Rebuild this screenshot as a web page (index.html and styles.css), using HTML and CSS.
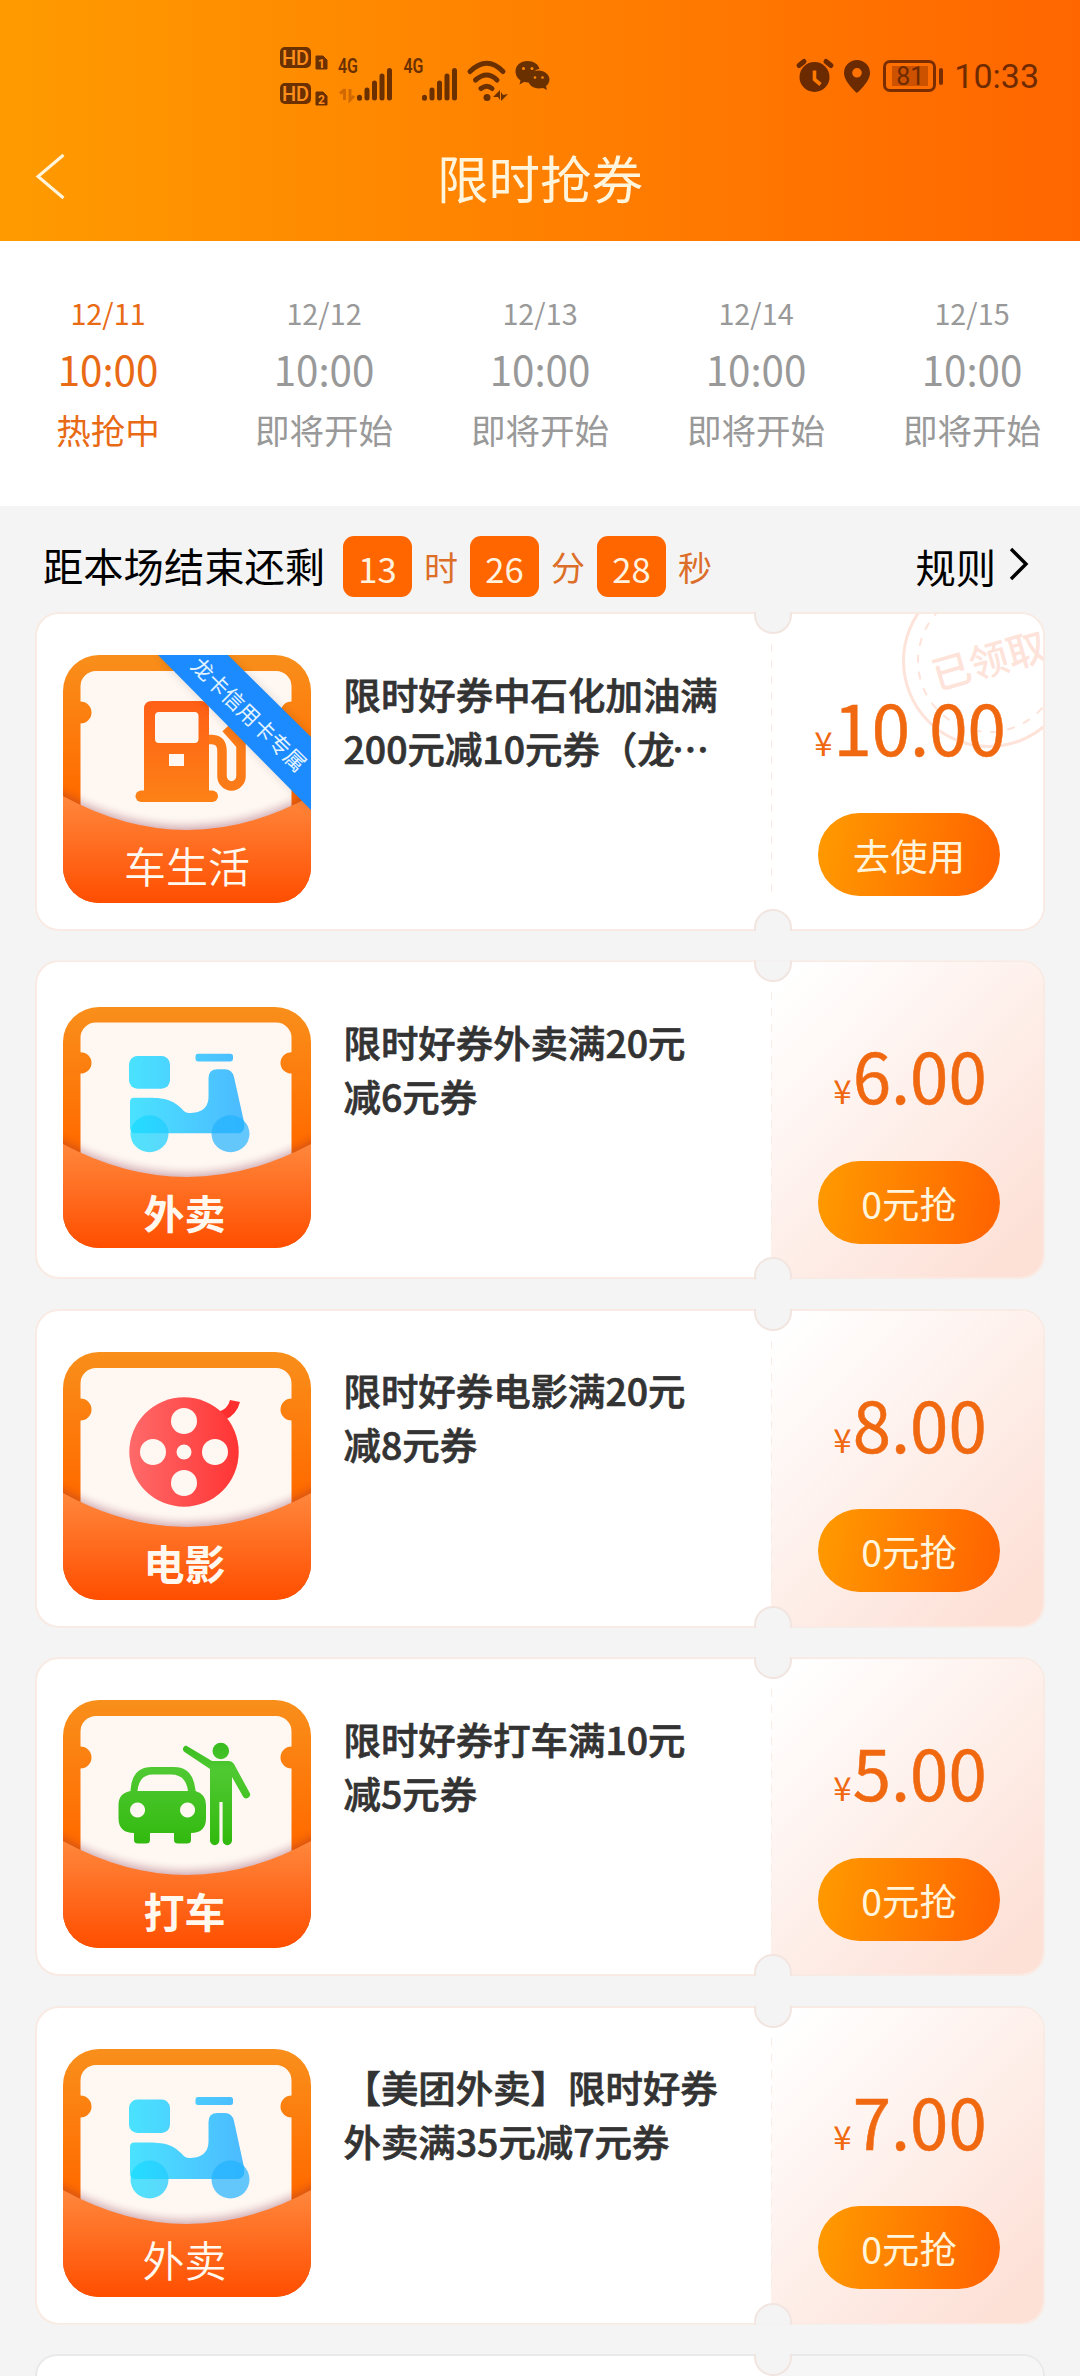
FILE: index.html
```html
<!DOCTYPE html>
<html lang="zh-CN">
<head>
<meta charset="utf-8">
<title>限时抢券</title>
<link rel="stylesheet" href="styles.css">
</head>
<body>
<svg class="defs" width="0" height="0" aria-hidden="true">
  <defs>
    <linearGradient id="frame" x1="0" y1="0" x2="0" y2="1"><stop offset="0" stop-color="#f98f1b"/><stop offset=".55" stop-color="#ff6c00"/><stop offset="1" stop-color="#ff6c00"/></linearGradient>
    <linearGradient id="flap" x1="0" y1="0" x2="0" y2="1"><stop offset="0" stop-color="#ff873c"/><stop offset="1" stop-color="#ff4e00"/></linearGradient>
    <linearGradient id="blue" gradientUnits="userSpaceOnUse" x1="66" y1="0" x2="186" y2="0"><stop offset="0" stop-color="#4ae2ff"/><stop offset="1" stop-color="#4cb9ff"/></linearGradient>
    <linearGradient id="wheel-l" x1="0" y1="0" x2="1" y2="0"><stop offset="0" stop-color="#18dcff"/><stop offset="1" stop-color="#23ccff"/></linearGradient>
    <linearGradient id="red" x1="0" y1="0" x2="1" y2="0"><stop offset="0" stop-color="#ff6a6a"/><stop offset="1" stop-color="#ff3434"/></linearGradient>
    <linearGradient id="green" gradientUnits="userSpaceOnUse" x1="0" y1="45" x2="0" y2="145"><stop offset="0" stop-color="#39bd20"/><stop offset=".25" stop-color="#50c932"/><stop offset="1" stop-color="#31b90e"/></linearGradient>
    <linearGradient id="pump" gradientUnits="userSpaceOnUse" x1="0" y1="46" x2="0" y2="147"><stop offset="0" stop-color="#ff5f16"/><stop offset="1" stop-color="#fd8216"/></linearGradient>
    <filter id="soft" x="-10%" y="-20%" width="120%" height="140%"><feGaussianBlur stdDeviation="5"/></filter>
    <clipPath id="round"><rect width="248" height="248" rx="36"/></clipPath>
    <symbol id="ticket" viewBox="0 0 248 248">
      <rect width="248" height="248" fill="url(#frame)"/>
      <path fill="#fff8f2" d="M33 16H213a15.500 15.500 0 0 1 15.500 15.500V46.500a11 11 0 0 0 0 22V200H17.500V68.500a11 11 0 0 0 0-22V31.500A15.500 15.500 0 0 1 33 16Z"/>
    </symbol>
    <symbol id="pocket" viewBox="0 0 248 248">
      <path d="M-10 133Q124 210 258 133V248H-10Z" fill="#7a1c3c" opacity=".36" filter="url(#soft)"/>
      <path d="M0 141Q124 209 248 141V248H0Z" fill="url(#flap)"/>
    </symbol>
    <symbol id="scooter" viewBox="0 0 248 248">
      <g fill="url(#blue)">
        <rect x="66" y="50.500" width="41" height="33.500" rx="8.500"/>
        <rect x="132.500" y="48" width="37.500" height="8" rx="2.500"/>
        <path d="M71 93.500H86C104 93.500 111 97 119 105Q122 109 126 109C137 109 145.500 105 145.500 92V73Q145.500 64 154.500 64H162Q169 64 171 72L181 118Q183 130 174 130H73Q67 130 67 124V98Q67 93.500 71 93.500Z"/>
      </g>
      <circle cx="86.500" cy="130.500" r="19" fill="url(#wheel-l)" opacity=".75"/>
      <circle cx="167.500" cy="130.500" r="19" fill="#22b2ff" opacity=".7"/>
    </symbol>
  </defs>
</svg>

<header class="header">
  <div class="status">
    <svg class="status-left" viewBox="276 40 280 68" fill="#6b3000">
      <g>
        <rect x="280" y="47" width="31" height="21" rx="5"/><text x="295.500" y="64.500" class="hd">HD</text>
        <path d="M316 56h7l4 4v9h-11z" stroke="#6b3000"/><text x="321.500" y="67.500" class="sim">1</text>
        <rect x="280" y="83" width="31" height="21" rx="5"/><text x="295.500" y="100.500" class="hd">HD</text>
        <path d="M316 92h7l4 4v9h-11z" stroke="#6b3000"/><text x="321.500" y="103.500" class="sim">2</text>
      </g>
      <text x="338" y="73" class="net" textLength="20" lengthAdjust="spacingAndGlyphs">4G</text>
      <path d="M340 93.500l5-4M344.500 89v11M350 89v11l4-4" fill="none" stroke="#d06a00" stroke-width="3"/>
      <g id="bars" stroke="#6b3000" stroke-width="5" stroke-linecap="round"><path d="M359.500 97.200v1M367 90v8M374.500 83v15M382 76v22M389.500 70.500v27.500"/></g>
      <text x="403.500" y="73" class="net" textLength="20" lengthAdjust="spacingAndGlyphs">4G</text>
      <use href="#bars" x="65"/>
      <g fill="none" stroke="#6b3000" stroke-width="5" stroke-linecap="round"><path d="M470 68.500Q487 52 503 68.500M475.500 77Q487 67 497 77M481 85.500Q487 81 492 85.500" transform="translate(0 3)"/></g>
      <circle cx="487" cy="97.500" r="3.500"/>
      <path d="M493 97l7-7v10l-2-3zM501 92l2 3 5-1-7 7z"/>
      <path d="M527.500 61c-7 0-12 4.500-12 10.500 0 4 2 7 5 9l-1 4 4.500-2.500 4 .5 3-.5c-1-7 4-13 8.500-13-1-5-6-8-12-8z"/>
      <path d="M538.500 70.500c-6 0-10.500 4-10.500 9s5 9 11 9l4-.5 4 2-1-4c2-1.500 3.500-4 3.500-6.500 0-5-5-9-11-9z"/>
      <g fill="#ff8a00"><circle cx="523.500" cy="68.500" r="1.500"/><circle cx="532" cy="68.500" r="1.500"/><circle cx="535" cy="77.500" r="1.300"/><circle cx="542.500" cy="77.500" r="1.300"/></g>
    </svg>
    <div class="status-right">
      <svg width="114" height="40" viewBox="794 56 114 40" class="alarm" fill="#6b2a00">
        <circle cx="814.500" cy="77" r="15"/>
        <path d="M799 65.500l5-4M826 61.500l5 4" stroke="#6b2a00" stroke-width="5" stroke-linecap="round"/>
        <path d="M814.500 70.500v9l6 5" fill="none" stroke="#ff7b00" stroke-width="3.600"/>
        <path fill-rule="evenodd" d="M857 60a13 13 0 0 0-13 13c0 9 13 20 13 20s13-11 13-20a13 13 0 0 0-13-13zm0 8a4.800 4.800 0 1 1 0 9.600 4.800 4.800 0 0 1 0-9.600z"/>
      </svg>
      <div class="battery"><span>81</span></div>
      <span class="clock">10:33</span>
    </div>
  </div>
  <div class="nav">
    <svg class="back" width="32" height="50" viewBox="0 0 32 50"><path d="M29.500 3L4 24.500L29.500 46" fill="none" stroke="#fff5dc" stroke-width="3"/></svg>
    <h1>限时抢券</h1>
  </div>
</header>

<nav class="tabs">
  <div class="tab active"><span class="date">12/11</span><span class="time">10:00</span><span class="state">热抢中</span></div>
  <div class="tab"><span class="date">12/12</span><span class="time">10:00</span><span class="state">即将开始</span></div>
  <div class="tab"><span class="date">12/13</span><span class="time">10:00</span><span class="state">即将开始</span></div>
  <div class="tab"><span class="date">12/14</span><span class="time">10:00</span><span class="state">即将开始</span></div>
  <div class="tab"><span class="date">12/15</span><span class="time">10:00</span><span class="state">即将开始</span></div>
</nav>

<section class="countdown">
  <span class="label">距本场结束还剩</span>
  <b>13</b><i>时</i><b>26</b><i>分</i><b>28</b><i>秒</i>
  <a class="rules">规则<svg width="22" height="36" viewBox="0 0 22 36"><path d="M4 3L19 18L4 33" fill="none" stroke="#000" stroke-width="3.400"/></svg></a>
</section>

<main class="list">
  <article class="card claimed">
    <div class="thumb">
      <svg viewBox="0 0 248 248"><g clip-path="url(#round)">
        <use href="#ticket"/>
        <g fill="url(#pump)"><path fill-rule="evenodd" d="M89 46H138Q146 46 146 54V137H81V54Q81 46 89 46ZM96 57Q92 57 92 61V84Q92 88 96 88H131.500Q135.500 88 135.500 84V61Q135.500 57 131.500 57ZM106 99V111H121V99Z"/><rect x="72.500" y="135.500" width="82.500" height="11.500" rx="5.700"/></g>
        <path d="M146 84.500H149Q159 85 159 96V121a9.500 10 0 0 0 19 0V90L163 73" fill="none" stroke="#fb7b18" stroke-width="9.500"/>
        <use href="#pocket"/>
        <path d="M94 0H165L248 82V155Z" fill="#000" opacity=".12" filter="url(#soft)"/>
        <path d="M95 0H165L248 82V155Z" fill="#1b8bff"/>
        <text class="ribbon" transform="translate(185.500 60) rotate(44.600)" y="7.500">龙卡信用卡专属</text>
        <text class="name light" x="124" y="228">车生活</text>
      </g></svg>
    </div>
    <h2>限时好券中石化加油满<br>200元减10元券（龙<span class="dots">…</span></h2>
    <div class="side">
      <svg class="stamp" width="176" height="176" viewBox="0 0 176 176" fill="none" stroke="#fde3d9"><circle cx="88" cy="88" r="85.500" stroke-width="3"/><circle cx="88" cy="88" r="71" stroke-width="2" stroke-dasharray="8 9"/><text transform="translate(88 88) rotate(-16)" y="14">已领取</text></svg>
      <p class="price"><small>¥</small>10.00</p>
      <button>去使用</button>
    </div>
  </article>

  <article class="card">
    <div class="thumb">
      <svg class="short" viewBox="0 0 248 248" preserveAspectRatio="none"><g clip-path="url(#round)">
        <use href="#ticket"/><use href="#scooter"/><use href="#pocket"/>
        <text class="name" x="121.500" y="228">外卖</text>
      </g></svg>
    </div>
    <h2>限时好券外卖满20元<br>减6元券</h2>
    <div class="side"><p class="price"><small>¥</small>6.00</p><button>0元抢</button></div>
  </article>

  <article class="card">
    <div class="thumb">
      <svg viewBox="0 0 248 248"><g clip-path="url(#round)">
        <use href="#ticket"/>
        <path d="M155 60Q165 57 167 48L177 50Q174 62 162 68Z" fill="#ff2f2f"/>
        <circle cx="121" cy="100" r="54.700" fill="url(#red)"/>
        <g fill="#fff8f2"><circle cx="121" cy="69" r="13"/><circle cx="121" cy="131" r="13"/><circle cx="90" cy="100" r="13"/><circle cx="152" cy="100" r="13"/><circle cx="121" cy="100" r="7.500"/></g>
        <use href="#pocket"/>
        <text class="name" x="121.500" y="228">电影</text>
      </g></svg>
    </div>
    <h2>限时好券电影满20元<br>减8元券</h2>
    <div class="side"><p class="price"><small>¥</small>8.00</p><button>0元抢</button></div>
  </article>

  <article class="card">
    <div class="thumb">
      <svg viewBox="0 0 248 248"><g clip-path="url(#round)">
        <use href="#ticket"/>
        <g fill="url(#green)">
          <path fill-rule="evenodd" d="M67.500 91V90Q69 67 89 67H111Q130 67 132.500 90V91Q143 94 143 105V118Q143 133 128 133V140Q128 143.500 124 143.500H115Q111 143.500 111 140V133H87V140Q87 143.500 83 143.500H75Q71 143.500 71 140V133Q55.500 133 55.500 118V105Q55.500 93 67.500 91ZM74.500 91H125Q123 74.500 108 74.500H90Q76 74.500 74.500 91ZM74.500 102.500a7.500 7.500 0 1 0 .1 0ZM124.500 102.500a7.500 7.500 0 1 0 .1 0Z"/>
          <circle cx="157.800" cy="51" r="8.300"/>
          <path d="M123 45.500L149 61H166Q169 61 171 64L186.500 92.500A3.800 3.800 0 0 1 180 96.500L169 77V140.500a4.700 4.700 0 0 1-9.400 0V102H156.400V140.500a4.700 4.700 0 0 1-9.400 0V69L121.500 52A3.600 3.600 0 0 1 123 45.500Z"/>
        </g>
        <use href="#pocket"/>
        <text class="name" x="121.500" y="228">打车</text>
      </g></svg>
    </div>
    <h2>限时好券打车满10元<br>减5元券</h2>
    <div class="side"><p class="price"><small>¥</small>5.00</p><button>0元抢</button></div>
  </article>

  <article class="card">
    <div class="thumb">
      <svg viewBox="0 0 248 248"><g clip-path="url(#round)">
        <use href="#ticket"/><use href="#scooter"/><use href="#pocket"/>
        <text class="name light" x="121.500" y="228">外卖</text>
      </g></svg>
    </div>
    <h2>【美团外卖】限时好券<br>外卖满35元减7元券</h2>
    <div class="side"><p class="price"><small>¥</small>7.00</p><button>0元抢</button></div>
  </article>

  <article class="card ended"><div class="side"></div></article>
</main>
</body>
</html>
```
FILE: styles.css
```css
* { box-sizing: border-box; margin: 0; padding: 0; }
html { overflow: hidden; }
body {
  width: 1080px;
  height: 2376px;
  overflow: hidden;
  background: #f4f4f4;
  font-family: "Noto Sans CJK SC", "Noto Sans", sans-serif;
  color: #000;
}
.defs { position: absolute; }

/* header */
.header {
  height: 241px;
  background: linear-gradient(90deg, #ff9b00, #ff6600);
}
.status {
  height: 120px;
  display: flex;
  justify-content: space-between;
  padding: 40px 41px 0 276px;
}
.status-left { width: 280px; height: 68px; }
.hd, .sim { fill: #ff8f1a; text-anchor: middle; font-family: Roboto, sans-serif; font-weight: 500; }
.hd { font-size: 20px; }
.sim { font-size: 12px; font-weight: 700; }
.net { font-family: Roboto, sans-serif; font-size: 20px; font-weight: 600; }
.status-right {
  display: flex;
  align-items: center;
  height: 71px;
  color: #6f2a00;
  font-family: Roboto, sans-serif;
}
.alarm { margin-right: -25px; }
.battery {
  position: relative;
  width: 53px;
  height: 32px;
  margin-right: 18px;
  padding: 3px;
  border: 3px solid #7a2d00;
  border-radius: 7px;
}
.battery span {
  display: block;
  width: 36px;
  margin-left: 3px;
  height: 20px;
  background: #cc5200;
  font-size: 25px;
  font-weight: 400;
  line-height: 21px;
  text-align: center;
}
.battery::after {
  content: "";
  position: absolute;
  left: 53px;
  top: 5px;
  width: 4px;
  height: 17px;
  border-radius: 2px;
  background: #7a2d00;
}
.clock { font-size: 34px; line-height: 40px; }
.nav {
  display: flex;
  align-items: center;
  height: 114px;
  padding: 0 34px;
}
.back { margin-right: -32px; }
.nav h1 {
  flex: 1;
  text-align: center;
  font-size: 51.500px;
  font-weight: 400;
  line-height: 76px;
  color: #fff5dc;
}

/* sessions */
.tabs {
  display: flex;
  height: 265px;
  padding-top: 45px;
  background: #fff;
}
.tab {
  width: 216px;
  display: flex;
  flex-direction: column;
  align-items: center;
  color: #999;
}
.tab.active { color: #e96a14; }
.date { font-size: 28.800px; line-height: 53px; }
.time { font-size: 40.300px; line-height: 60px; }
.state { font-size: 34.560px; line-height: 60px; }

/* countdown */
.countdown {
  display: flex;
  align-items: center;
  height: 106px;
  padding: 15px 50px 0 43px;
}
.countdown .label { width: 300px; padding-bottom: 4px; font-size: 40.300px; line-height: 60px; }
.countdown b {
  width: 69px;
  height: 61px;
  border-radius: 11px;
  background: #ff6600;
  color: #fff3e0;
  font-size: 34.560px;
  font-weight: 400;
  line-height: 65px;
  text-align: center;
}
.countdown i {
  width: 58px;
  color: #dc6e28;
  font-size: 34px;
  font-style: normal;
  line-height: 64px;
  padding-top: 1px;
  text-align: center;
}
.rules {
  display: flex;
  align-items: center;
  margin-left: auto;
  padding-bottom: 2px;
  font-size: 40.300px;
  line-height: 60px;
}
.rules svg { margin: 0 1px 3px 11px; }

/* coupons */
.list {
  display: flex;
  flex-direction: column;
  gap: 29.400px;
  padding: 0 35px;
}
.card {
  position: relative;
  flex: none;
  display: grid;
  grid-template-columns: 306.500px 427.500px 1fr;
  height: 319px;
  clip-path: inset(0);
  border: 2px solid #f9eae3;
  border-radius: 24px;
  background: #fff;
}
/* side notches */
.card::before,
.card::after {
  content: "";
  position: absolute;
  z-index: 1;
  left: 717px;
  width: 34px;
  height: 34px;
  border: 2px solid #f2e5e0;
  border-radius: 50%;
  background: #f4f4f4;
}
.card::before { top: -18px; }
.card::after { bottom: -18px; }
.thumb {
  display: flex;
  align-items: center;
  height: 248px;
  margin: 41px 0 0 26px;
}
.thumb svg { width: 248px; height: 248px; }
.thumb .short { height: 241px; }
.name {
  fill: #fff8ee;
  font-size: 41px;
  font-weight: 700;
  text-anchor: middle;
}
.name.light { font-weight: 350; font-size: 42px; }
.ribbon { fill: #e4f4ff; font-size: 21.600px; text-anchor: middle; }
.card h2 {
  padding-top: 52.500px;
  font-size: 37.440px;
  font-weight: 500;
  line-height: 54px;
  white-space: nowrap;
  color: #333;
  -webkit-text-stroke: .7px #333;
}
.dots { margin-left: -3px; }
.side {
  position: relative;
  overflow: hidden;
  padding-top: 64px;
  border-radius: 0 22px 22px 0;
  background: linear-gradient(135deg, #fff 5%, #fde0d6 92%);
  text-align: center;
}
.side::before {
  content: "";
  position: absolute;
  left: -1px;
  top: 30px;
  bottom: 30px;
  width: 2px;
  background: repeating-linear-gradient(#f8ece7 0 8px, transparent 8px 16px);
}
.claimed .side { background: #fff; }
.stamp { position: absolute; left: 130px; top: -41px; }
.stamp text {
  fill: #fde3d9;
  stroke: none;
  font-size: 39px;
  font-weight: 500;
  text-anchor: middle;
}
.price {
  position: relative;
  height: 134.500px;
  padding-left: 6px;
  font-size: 69px;
  line-height: 96px;
  color: #f06911;
  -webkit-text-stroke: .5px #f06911;
}
.price small { margin-right: 1px; font-size: 33px; -webkit-text-stroke: 0; }
.side button {
  width: 182px;
  height: 83px;
  margin-left: 4px;
  border: 0;
  border-radius: 42px;
  background: linear-gradient(100deg, #ff9b00, #ff6600 92%);
  color: #fff5dc;
  font: 400 37.440px/84px "Noto Sans CJK SC", sans-serif;
}
/* last card, peeking in at the fold */
.ended {
  height: 22px;
  border-color: #e9e9e9;
  border-bottom: 0;
  border-radius: 24px 24px 0 0;
}
.ended::after { display: none; }
.ended .side { grid-column: 3; padding: 0; border-radius: 0 22px 0 0; background: #f6f6f6; }
.ended .side::before { display: none; }
```
